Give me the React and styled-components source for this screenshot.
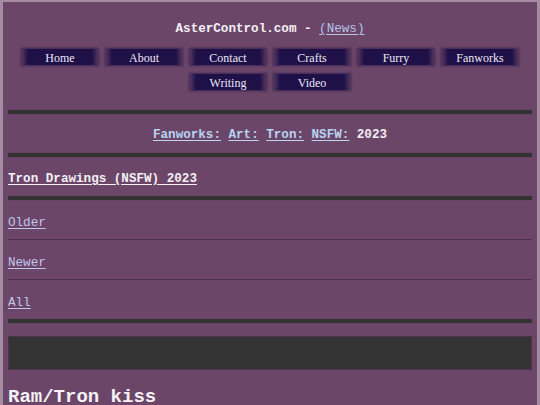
import React from 'react';
import styled, { createGlobalStyle } from 'styled-components';

const GlobalStyle = createGlobalStyle`
  html, body {
    margin: 0;
    padding: 0;
    background: #a58ca3;
  }
  body {
    padding: 2px 3px 0;
    font-family: "Liberation Mono", "Courier New", monospace;
  }
  * {
    box-sizing: border-box;
  }
`;

const Page = styled.div`
  background: #6b4669;
  padding: 17px 5px 40px;
  min-height: 420px;
  color: #f2eef2;
`;

const Title = styled.div`
  text-align: center;
  font-size: 12.6px;
  font-weight: bold;
  line-height: 20px;
  color: #f4f0f4;
`;

const NewsLink = styled.a`
  font-weight: normal;
  color: #b9c3e6;
  text-decoration: underline;
  text-underline-offset: 2px;
`;

const Nav = styled.nav`
  display: flex;
  flex-wrap: wrap;
  justify-content: center;
  gap: 9px 8px;
  margin: 10px 14px 0;
`;

const NavButton = styled.a`
  width: 76px;
  height: 16px;
  padding-top: 1px;
  line-height: 16px;
  text-align: center;
  font-family: "Liberation Serif", "Times New Roman", serif;
  font-size: 12px;
  color: #ece8f6;
  text-decoration: none;
  background: linear-gradient(to right, rgba(31,16,72,0.3), #1f1048 6px, #1f1048 calc(100% - 6px), rgba(31,16,72,0.3));
  box-shadow: 0 0 2px 1px rgba(31, 16, 72, 0.6);
`;

const Bar = styled.hr`
  margin: ${p => p.$top || 0}px 0 0;
  height: 4px;
  border: none;
  background: #333333;
  box-shadow: 0 0 1px rgba(0, 0, 0, 0.4);
`;

const Crumbs = styled.div`
  height: 39px;
  padding-top: 3px;
  display: flex;
  align-items: center;
  justify-content: center;
  gap: 7.5px;
  font-size: 12.6px;
  font-weight: bold;
`;

const CrumbLink = styled.a`
  color: #b8d4f0;
  text-decoration: underline;
  text-underline-offset: 2px;
`;

const Section = styled.div`
  height: 39px;
  padding-top: 5px;
  display: flex;
  align-items: center;
  font-size: 12.6px;
  font-weight: bold;
`;

const SectionLink = styled.a`
  color: #f4f0f4;
  text-decoration: underline;
  text-underline-offset: 2px;
  white-space: pre;
`;

const PageList = styled.div`
  display: flex;
  flex-direction: column;
`;

const PageItem = styled.div`
  height: ${p => (p.$first ? 39 : 40)}px;
  padding-top: 6px;
  display: flex;
  align-items: center;
  border-top: ${p => (p.$first ? 'none' : '1px solid #4e3050')};
  font-size: 12.6px;
`;

const PageLink = styled.a`
  color: #c0c6ea;
  text-decoration: underline;
  text-underline-offset: 2px;
`;

const DarkBox = styled.div`
  margin-top: 13px;
  height: 34px;
  background: #333333;
  border: 1px solid #4d344b;
`;

const Heading = styled.h1`
  margin: 15px 0 0;
  font-size: 19px;
  line-height: 24px;
  font-weight: bold;
  color: #f6f2f6;
`;

const navItems = ['Home', 'About', 'Contact', 'Crafts', 'Furry', 'Fanworks', 'Writing', 'Video'];

const App = () => {
    return (
        <>
            <GlobalStyle/>
            <Page>
                <Title>
                    AsterControl.com - <NewsLink href="#">(News)</NewsLink>
                </Title>
                <Nav>
                    {navItems.map(item => (
                        <NavButton key={item} href="#">{item}</NavButton>
                    ))}
                </Nav>

                <Bar $top={20}/>
                <Crumbs>
                    <CrumbLink href="#">Fanworks:</CrumbLink>
                    <CrumbLink href="#">Art:</CrumbLink>
                    <CrumbLink href="#">Tron:</CrumbLink>
                    <CrumbLink href="#">NSFW:</CrumbLink>
                    <span>2023</span>
                </Crumbs>
                <Bar/>
                <Section>
                    <SectionLink href="#">Tron Drawings (NSFW) 2023</SectionLink>
                </Section>
                <Bar/>

                <PageList>
                    <PageItem $first><PageLink href="#">Older</PageLink></PageItem>
                    <PageItem><PageLink href="#">Newer</PageLink></PageItem>
                    <PageItem><PageLink href="#">All</PageLink></PageItem>
                </PageList>
                <Bar/>

                <DarkBox/>
                <Heading>Ram/Tron kiss</Heading>
            </Page>
        </>
    );
};

export default App;
